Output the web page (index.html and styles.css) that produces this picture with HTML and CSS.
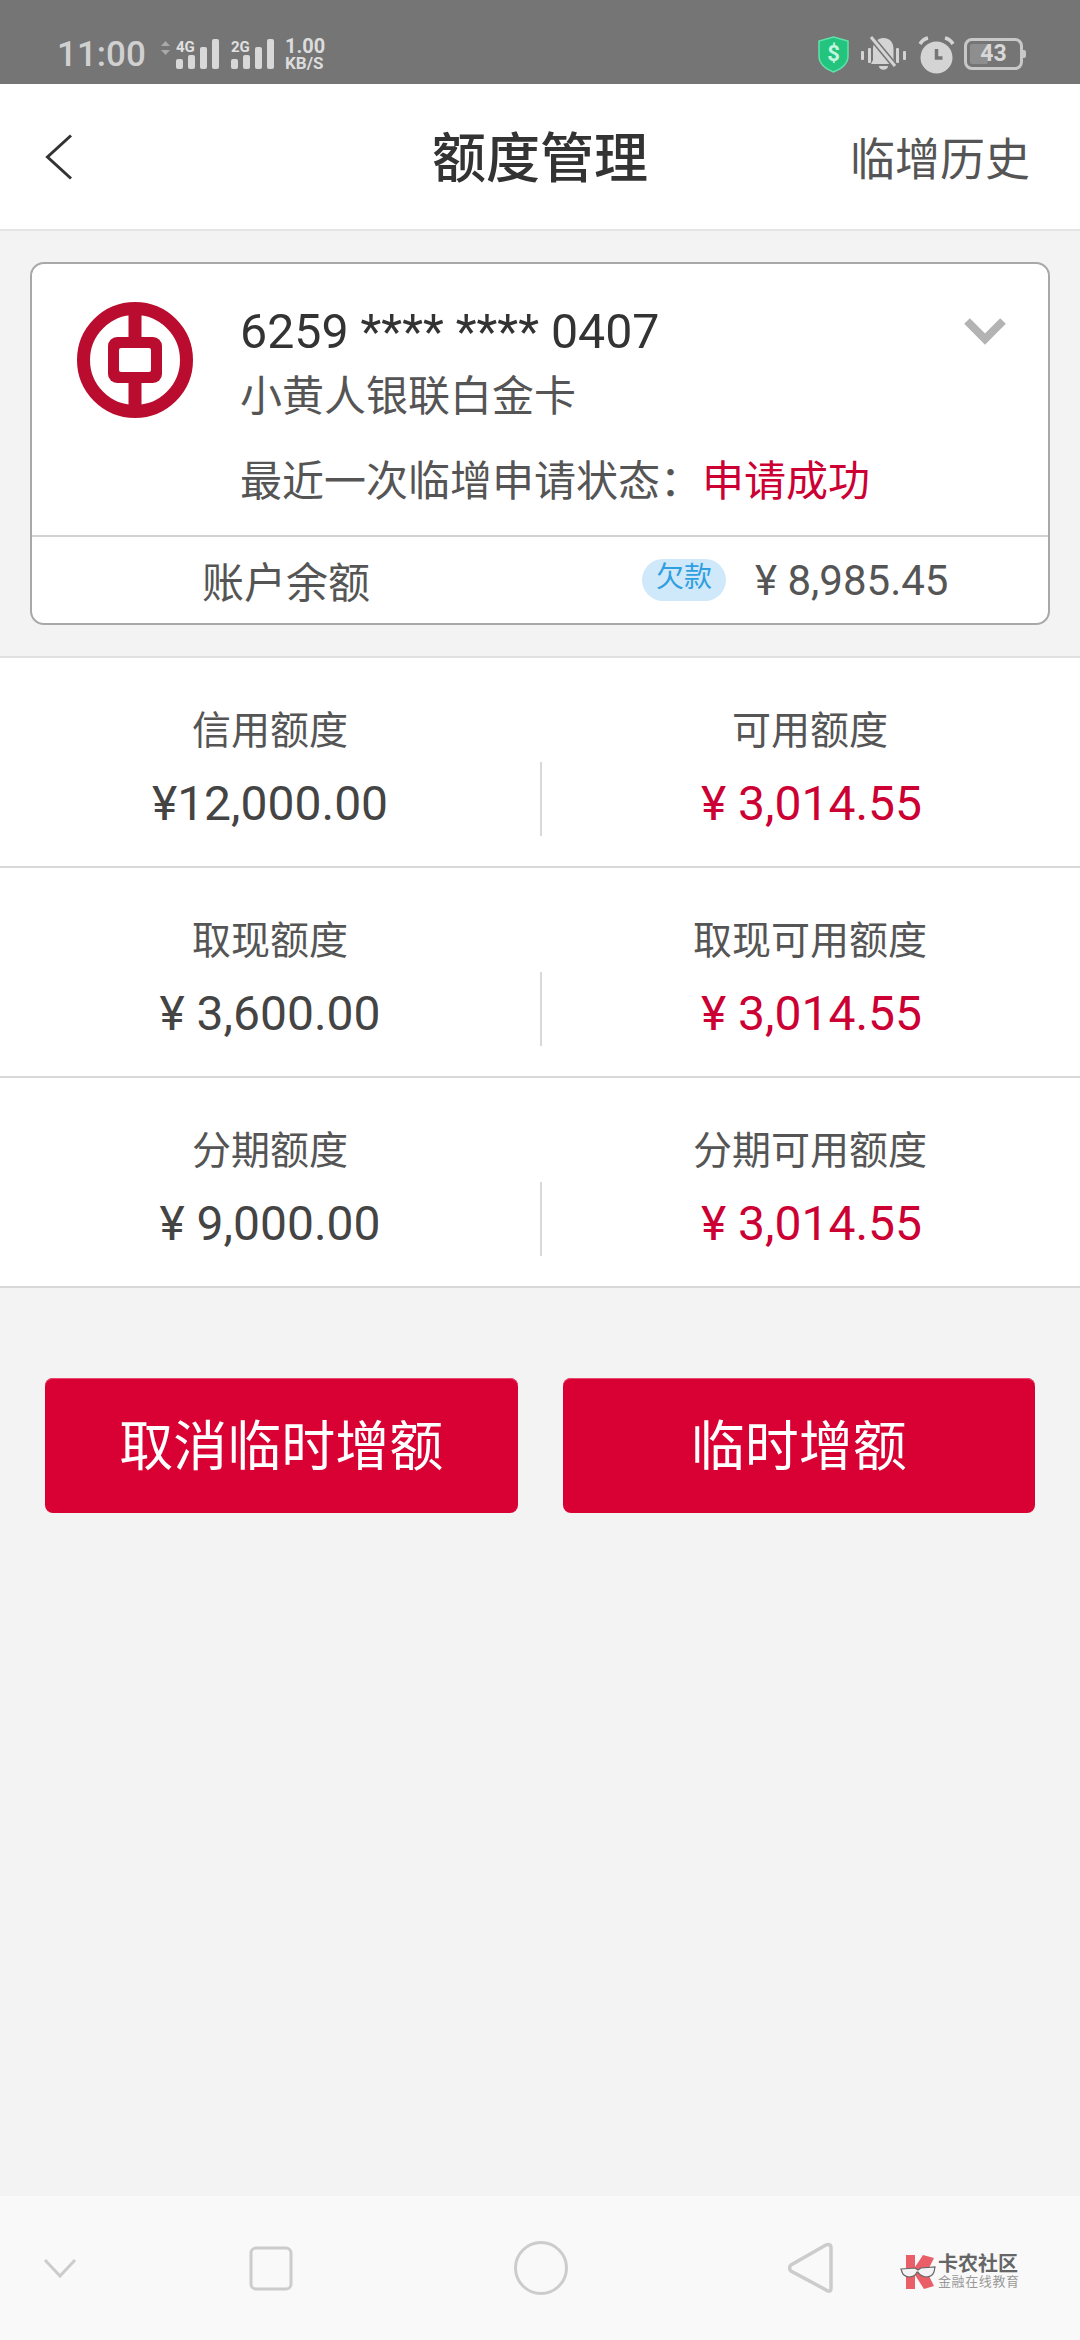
FILE: index.html
```html
<!DOCTYPE html>
<html lang="zh">
<head>
<meta charset="utf-8">
<title>额度管理</title>
<link rel="stylesheet" href="styles.css">
</head>
<body>
<div class="page">
  <div class="status">
    <div class="status-left">
      <span class="time">11:00</span>
      <svg class="arrows" width="9" height="14" viewBox="0 0 9 14"><path d="M4.500 0L9 5H0zM4.500 14L0 9h9z" fill="#a9a9a9"/></svg>
      <svg class="sig" width="43" height="30" viewBox="0 0 43 30"><text x="0" y="13" class="sig-t">4G</text><rect x="0" y="20" width="7" height="10" rx="2"/><rect x="12" y="16" width="7" height="14" rx="2"/><rect x="24" y="8" width="7" height="22" rx="2"/><rect x="36" y="0" width="7" height="30" rx="2"/></svg>
      <svg class="sig sig2" width="43" height="30" viewBox="0 0 43 30"><text x="0" y="13" class="sig-t">2G</text><rect x="0" y="20" width="7" height="10" rx="2"/><rect x="12" y="16" width="7" height="14" rx="2"/><rect x="24" y="8" width="7" height="22" rx="2"/><rect x="36" y="0" width="7" height="30" rx="2"/></svg>
      <div class="speed"><span class="sp1">1.00</span><span class="sp2">KB/S</span></div>
    </div>
    <div class="status-right">
      <svg class="shield" width="31" height="37" viewBox="0 0 31 37"><path d="M15.500 1L30 5v15c0 8-7 13-14.500 16C8 33 1 28 1 20V5z" fill="#22c47e" stroke="#5fe3ab" stroke-width="1.500"/><text x="15.500" y="25" class="dollar">$</text></svg>
      <svg class="bell" width="47" height="38" viewBox="0 0 47 38"><g fill="#d4d4d4"><rect x="1" y="15" width="3" height="9" rx="1"/><rect x="8" y="12" width="3" height="15" rx="1"/><rect x="36" y="12" width="3" height="15" rx="1"/><rect x="43" y="15" width="3" height="9" rx="1"/><path d="M23.500 2c7 0 10 5 10 11v10l3 5H11l2-4V13c0-6 4-11 10.500-11z"/><path d="M19 30h9c0 5-9 5-9 0z"/></g><path d="M11 1l24 29" stroke="#757575" stroke-width="6"/><path d="M11 1l24 29" stroke="#d4d4d4" stroke-width="3"/></svg>
      <svg class="alarm" width="37" height="38" viewBox="0 0 37 38"><circle cx="18.500" cy="21.500" r="16" fill="#d4d4d4"/><path d="M18.500 13v9h6" fill="none" stroke="#757575" stroke-width="3.500"/><path d="M2 8q3-5 8-6M35 8q-3-5-8-6" fill="none" stroke="#d4d4d4" stroke-width="3.500"/></svg>
      <div class="battery"><div class="batt-fill"></div><span class="batt-num">43</span></div>
    </div>
  </div>

  <header class="topbar">
    <svg class="back" width="28" height="46" viewBox="0 0 28 46"><path d="M26 1.500L2.500 23 26 44.500" fill="none" stroke="#333" stroke-width="3"/></svg>
    <h1 class="title">额度管理</h1>
    <span class="history">临增历史</span>
  </header>

  <section class="card-wrap">
    <div class="card">
      <div class="card-top">
        <svg class="bank" width="116" height="116" viewBox="0 0 116 116">
          <circle cx="58" cy="58" r="51.500" fill="none" stroke="#b90c2e" stroke-width="13"/>
          <rect x="51.500" y="6" width="13" height="104" fill="#b90c2e"/>
          <rect x="31" y="35" width="54" height="46" rx="9" fill="#b90c2e"/>
          <rect x="42" y="46" width="32" height="24" rx="2" fill="#fff"/>
        </svg>
        <div class="card-info">
          <div class="card-no">6259 **** **** 0407</div>
          <div class="card-name">小黄人银联白金卡</div>
          <div class="card-state">最近一次临增申请状态：<span class="red">申请成功</span></div>
        </div>
        <svg class="expand" width="42" height="28" viewBox="0 0 42 28"><path d="M3 3l18 18L39 3" fill="none" stroke="#b3b3b3" stroke-width="8"/></svg>
      </div>
      <div class="card-bottom">
        <span class="bal-label">账户余额</span>
        <span class="badge">欠款</span>
        <span class="bal-num">¥ 8,985.45</span>
      </div>
    </div>
  </section>

  <section class="rows">
    <div class="row">
      <div class="cell"><div class="label">信用额度</div><div class="val">¥12,000.00</div></div>
      <div class="cell cell-r"><div class="label">可用额度</div><div class="val red">¥ 3,014.55</div></div>
    </div>
    <div class="row">
      <div class="cell"><div class="label">取现额度</div><div class="val">¥ 3,600.00</div></div>
      <div class="cell cell-r"><div class="label">取现可用额度</div><div class="val red">¥ 3,014.55</div></div>
    </div>
    <div class="row">
      <div class="cell"><div class="label">分期额度</div><div class="val">¥ 9,000.00</div></div>
      <div class="cell cell-r"><div class="label">分期可用额度</div><div class="val red">¥ 3,014.55</div></div>
    </div>
  </section>

  <div class="actions">
    <button class="btn">取消临时增额</button>
    <button class="btn">临时增额</button>
  </div>

  <nav class="navbar">
    <svg class="nav-down" width="34" height="20" viewBox="0 0 34 20"><path d="M2 2l15 16L32 2" fill="none" stroke="#ccc" stroke-width="3"/></svg>
    <svg class="nav-sq" width="44" height="45" viewBox="0 0 44 45"><rect x="2" y="2" width="40" height="41" rx="5" fill="none" stroke="#ccc" stroke-width="3"/></svg>
    <svg class="nav-ci" width="54" height="54" viewBox="0 0 54 54"><circle cx="27" cy="27" r="25.500" fill="none" stroke="#ccc" stroke-width="3"/></svg>
    <svg class="nav-tr" width="45" height="52" viewBox="0 0 45 52"><path d="M40 2.500q3 0 3 3v41q0 3-3 2.500L3 29q-3-3 0-6L37 3.500q2-1 3-1z" fill="none" stroke="#ccc" stroke-width="3.500"/></svg>
    <div class="mark">
      <svg width="36" height="36" viewBox="0 0 36 36"><path d="M6 1h9v12L23 1l11 3-7 14 7 14-10 3-9-14v14H6z" fill="#ea5f67"/><path d="M1 15l14-1 3 2 3-2 14-1-1 5q-2 5-8 5-6-1-8-5h-1q-2 5-8 5-6-1-7-5z" fill="#f4f4f4" stroke="#666" stroke-width="1.200"/></svg>
      <div class="mark-text"><span class="mark-1">卡农社区</span><span class="mark-2">金融在线教育</span></div>
    </div>
  </nav>
</div>
</body>
</html>
```
FILE: styles.css
```css
* { box-sizing: border-box; }
html, body { margin: 0; padding: 0; }
body { font-family: Roboto, "Noto Sans CJK SC", sans-serif; }
.page { width: 1080px; height: 2340px; background: #f3f3f3; display: flex; flex-direction: column; position: relative; overflow: hidden; }

.status { height: 84px; background: #757575; display: flex; justify-content: space-between; padding: 36px 57px 0 57px; color: #d4d4d4; }
.status-left { display: flex; align-items: flex-start; }
.time { font-size: 35px; line-height: 38px; font-weight: 500; width: 104px; color: #d0d0d0; }
.arrows { margin-top: 5px; margin-right: 6px; }
.sig { margin-top: 3px; }
.sig rect { fill: #d8d8d8; }
.sig-t { font: 700 15px Roboto, sans-serif; fill: #e0e0e0; }
.sig2 { margin-left: 12px; }
.speed { margin-left: 11px; display: flex; flex-direction: column; margin-top: 1px; font-weight: 700; color: #dcdcdc; width: 44px; }
.sp1 { font-size: 20px; line-height: 19px; }
.sp2 { font-size: 17px; line-height: 15px; }
.status-right { display: flex; align-items: flex-start; }
.shield { position: relative; left: 1px; }
.dollar { font: 700 22px Roboto, sans-serif; fill: #c4f5de; text-anchor: middle; }
.bell { margin-left: 12px; }
.alarm { margin-left: 11px; }
.battery { margin-left: 9px; margin-top: 2px; width: 59px; height: 32px; border: 3px solid #c8c8c8; border-radius: 8px; position: relative; display: flex; align-items: center; justify-content: center; }
.battery::after { content: ""; position: absolute; right: -6px; top: 9px; width: 3px; height: 8px; background: #c8c8c8; border-radius: 0 2px 2px 0; }
.batt-fill { position: absolute; left: 3px; top: 3px; bottom: 3px; width: 18px; background: #8e8e8e; border-radius: 2px; }
.batt-num { position: relative; font-size: 23px; line-height: 26px; font-weight: 700; color: #d8d8d8; }

.topbar { height: 147px; background: #fff; border-bottom: 2px solid #e5e5e5; display: flex; align-items: center; padding: 0 50px 0 45px; position: relative; }
.back { flex: none; }
.title { position: absolute; left: 0; right: 0; top: 3px; margin: 0; text-align: center; font-size: 54px; line-height: 145px; font-weight: 500; color: #333; pointer-events: none; }
.history { margin-left: auto; font-size: 45px; color: #555; }

.card-wrap { padding: 31px 30px 31px; border-bottom: 2px solid #e0e0e0; }
.card { height: 363px; background: #fff; border: 2px solid #a8a8a8; border-radius: 14px; display: flex; flex-direction: column; }
.card-top { height: 273px; display: flex; align-items: flex-start; padding: 38px 42px 0 45px; border-bottom: 2px solid #d2d2d2; }
.bank { flex: none; }
.card-info { margin-left: 47px; flex: 1; color: #555; }
.card-no { font-size: 48.3px; line-height: 56px; color: #333; margin-top: 2px; }
.card-name { font-size: 42px; line-height: 60px; margin-top: 7px; }
.card-state { font-size: 42px; line-height: 60px; margin-top: 25px; }
.expand { flex: none; margin-top: 16px; }
.red { color: #cc0033; }
.card-bottom { flex: 1; display: flex; align-items: center; color: #555; padding-left: 170px; }
.bal-label { font-size: 42px; width: 440px; margin-top: -2px; }
.badge { width: 84px; height: 42px; border-radius: 21px; background: #cfe8fa; color: #2f9fe0; font-size: 28px; line-height: 38px; text-align: center; margin-top: -1px; }
.bal-num { font-size: 42px; margin-left: 29px; }

.rows { background: #fff; }
.row { height: 210px; display: grid; grid-template-columns: 1fr 1fr; border-bottom: 2px solid #d8d8d8; }
.cell { text-align: center; padding-top: 46px; }
.cell-r { position: relative; }
.cell-r::before { content: ""; position: absolute; left: 0; top: 104px; height: 74px; width: 2px; background: #d8d8d8; }
.label { font-size: 39px; line-height: 54px; color: #555; }
.val { font-size: 48px; line-height: 56px; color: #444; margin-top: 18px; }
.val.red { color: #cc0033; padding-left: 3px; }

.actions { display: flex; gap: 45px; padding: 90px 45px 0; }
.btn { flex: 1; height: 135px; border: 0; border-radius: 8px; background: #d90033; box-shadow: inset 0 1px 0 #e8486e; color: #fff; font-family: inherit; font-size: 54px; padding: 0 0 7px; }

.navbar { position: absolute; left: 0; right: 0; bottom: 0; height: 144px; background: #f9f9f9; display: flex; align-items: flex-start; }
.nav-down { margin: 62px 0 0 43px; flex: none; }
.nav-sq { margin: 50px 0 0 172px; flex: none; }
.nav-ci { margin: 45px 0 0 221px; flex: none; }
.nav-tr { margin: 46px 0 0 220px; flex: none; }
.mark { position: absolute; left: 900px; top: 58px; display: flex; align-items: flex-start; gap: 2px; }
.mark-text { display: flex; flex-direction: column; }
.mark-1 { font-size: 20px; line-height: 20px; font-weight: 700; color: #666; }
.mark-2 { font-size: 13px; line-height: 15px; color: #999; letter-spacing: .6px; }
```
